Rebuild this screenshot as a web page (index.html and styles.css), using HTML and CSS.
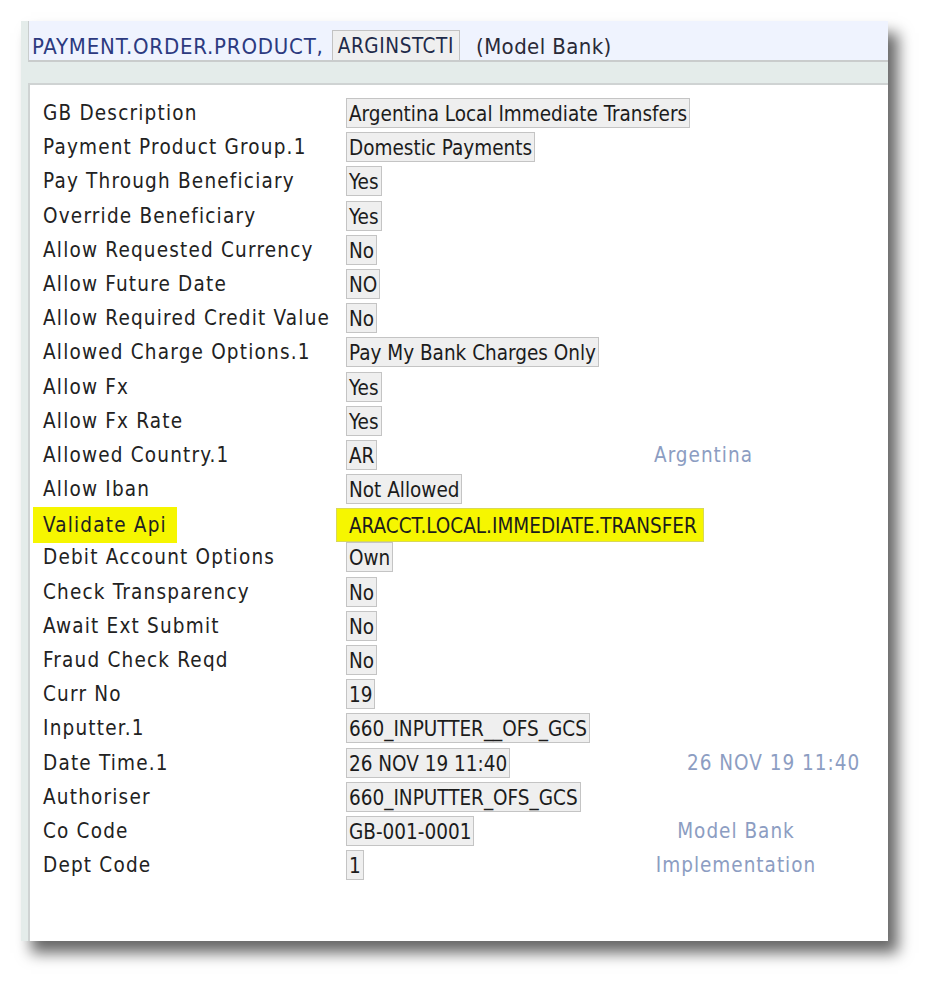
FILE: index.html
```html
<!DOCTYPE html>
<html lang="en">
<head>
    <meta charset="UTF-8">
    <title>PAYMENT.ORDER.PRODUCT</title>
    <link rel="stylesheet" href="styles.css">
</head>
<body>
    <div class="window">
        <div class="title-bar">
            <span class="app-name">PAYMENT.ORDER.PRODUCT,</span>
            <span class="record-id">ARGINSTCTI</span>
            <span class="company">(Model Bank)</span>
        </div>
        <div class="band"></div>

        <div class="content">
            <div class="row"><span class="label">GB Description</span><span class="value"><span class="box">Argentina Local Immediate Transfers</span></span></div>
            <div class="row"><span class="label">Payment Product Group.1</span><span class="value"><span class="box">Domestic Payments</span></span></div>
            <div class="row"><span class="label">Pay Through Beneficiary</span><span class="value"><span class="box">Yes</span></span></div>
            <div class="row"><span class="label">Override Beneficiary</span><span class="value"><span class="box">Yes</span></span></div>
            <div class="row"><span class="label">Allow Requested Currency</span><span class="value"><span class="box">No</span></span></div>
            <div class="row"><span class="label">Allow Future Date</span><span class="value"><span class="box">NO</span></span></div>
            <div class="row"><span class="label">Allow Required Credit Value</span><span class="value"><span class="box">No</span></span></div>
            <div class="row"><span class="label">Allowed Charge Options.1</span><span class="value"><span class="box">Pay My Bank Charges Only</span></span></div>
            <div class="row"><span class="label">Allow Fx</span><span class="value"><span class="box">Yes</span></span></div>
            <div class="row"><span class="label">Allow Fx Rate</span><span class="value"><span class="box">Yes</span></span></div>
            <div class="row"><span class="label">Allowed Country.1</span><span class="value"><span class="box">AR</span></span><span class="desc shift-left">Argentina</span></div>
            <div class="row"><span class="label">Allow Iban</span><span class="value"><span class="box">Not Allowed</span></span></div>
            <div class="row"><span class="label"><span class="hl-label">Validate Api</span></span><span class="value"><span class="box hl-box">ARACCT.LOCAL.IMMEDIATE.TRANSFER</span></span></div>
            <div class="row"><span class="label">Debit Account Options</span><span class="value"><span class="box">Own</span></span></div>
            <div class="row"><span class="label">Check Transparency</span><span class="value"><span class="box">No</span></span></div>
            <div class="row"><span class="label">Await Ext Submit</span><span class="value"><span class="box">No</span></span></div>
            <div class="row"><span class="label">Fraud Check Reqd</span><span class="value"><span class="box">No</span></span></div>
            <div class="row"><span class="label">Curr No</span><span class="value"><span class="box">19</span></span></div>
            <div class="row"><span class="label">Inputter.1</span><span class="value"><span class="box">660_INPUTTER__OFS_GCS</span></span></div>
            <div class="row"><span class="label">Date Time.1</span><span class="value"><span class="box">26 NOV 19 11:40</span></span><span class="desc shift-right">26 NOV 19 11:40</span></div>
            <div class="row"><span class="label">Authoriser</span><span class="value"><span class="box">660_INPUTTER_OFS_GCS</span></span></div>
            <div class="row"><span class="label">Co Code</span><span class="value"><span class="box">GB-001-0001</span></span><span class="desc">Model Bank</span></div>
            <div class="row"><span class="label">Dept Code</span><span class="value"><span class="box">1</span></span><span class="desc">Implementation</span></div>
        </div>
    </div>
</body>
</html>
```

FILE: styles.css
```css
body {
    margin: 0;
    padding: 21px 0 42px 21px;
    background: #fff;
    font-family: "DejaVu Sans Condensed", "DejaVu Sans", sans-serif;
    font-stretch: condensed;
    color: #222;
}

.window {
    width: 867px;
    height: 920px;
    padding-left: 7px;
    box-sizing: border-box;
    background: #e4ecea;
    display: flex;
    flex-direction: column;
    box-shadow: 10px 12px 14px rgba(0, 0, 0, 0.6);
}

.title-bar {
    height: 41px;
    box-sizing: border-box;
    background: #eff3fe;
    border-left: 1px solid #c9cdcd;
    border-bottom: 2px solid #c9cccc;
    display: flex;
    align-items: flex-end;
    padding-left: 3px;
    font-size: 22px;
    letter-spacing: 0.8px;
}

.app-name {
    color: #2c3a80;
    align-self: center;
    margin-top: 11px;
}

.record-id {
    margin-left: 8px;
    padding: 0 5px;
    height: 30px;
    line-height: 30px;
    font-size: 20.5px;
    letter-spacing: 0.6px;
    background: #efefef;
    border: 1px solid #c2c2c2;
    border-bottom: none;
    box-sizing: border-box;
    color: #1e2a4a;
}

.company {
    margin-left: 16px;
    align-self: center;
    margin-top: 11px;
    letter-spacing: 0.4px;
    color: #2a2a38;
}

.band {
    height: 21px;
}

.content {
    flex: 1;
    background: #fff;
    border-top: 2px solid #cfd3d3;
    border-left: 2px solid #cfd3d3;
    padding: 13px 0 0 13px;
}

.row {
    display: grid;
    grid-template-columns: 303px 300px 180px;
    align-items: center;
    height: 30px;
    margin-bottom: 4.2px;
    font-size: 20.5px;
}

.label {
    letter-spacing: 1.2px;
    white-space: nowrap;
}

.box {
    display: inline-block;
    height: 30px;
    line-height: 30px;
    padding: 0 2px;
    box-sizing: border-box;
    background: #efefef;
    border: 1px solid #c4c4c4;
    color: #1c1c1c;
    white-space: nowrap;
}

.hl-label {
    background: #f6f600;
    margin-left: -10px;
    padding: 6px 10px 6px 10px;
}

.box.hl-box {
    background: #f6f600;
    border-color: #d8d85a;
    margin-left: -10px;
    padding: 0 6px 0 12px;
    height: 34px;
    line-height: 34px;
}

.desc {
    text-align: center;
    color: #8c9dc2;
    letter-spacing: 1px;
    white-space: nowrap;
}

.desc.shift-left {
    margin-left: -65px;
}

.desc.shift-right {
    margin-left: 41px;
}
```
